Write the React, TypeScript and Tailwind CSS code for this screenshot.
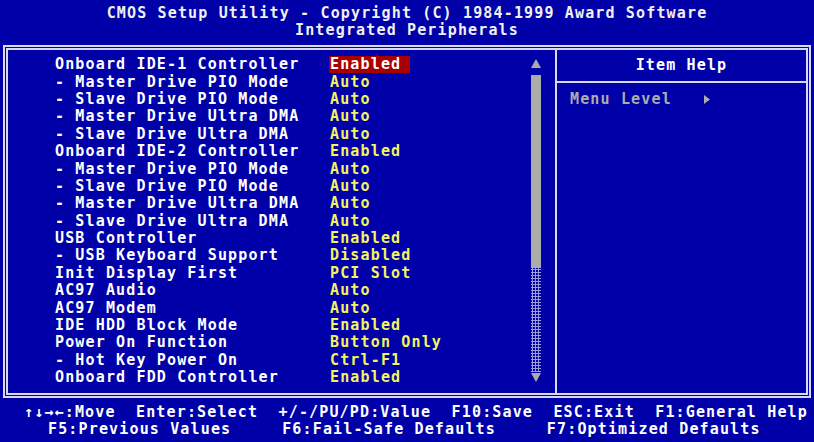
const items: [string, string][] = [
  ["Onboard IDE-1 Controller", "Enabled"],
  ["- Master Drive PIO Mode", "Auto"],
  ["- Slave Drive PIO Mode", "Auto"],
  ["- Master Drive Ultra DMA", "Auto"],
  ["- Slave Drive Ultra DMA", "Auto"],
  ["Onboard IDE-2 Controller", "Enabled"],
  ["- Master Drive PIO Mode", "Auto"],
  ["- Slave Drive PIO Mode", "Auto"],
  ["- Master Drive Ultra DMA", "Auto"],
  ["- Slave Drive Ultra DMA", "Auto"],
  ["USB Controller", "Enabled"],
  ["- USB Keyboard Support", "Disabled"],
  ["Init Display First", "PCI Slot"],
  ["AC97 Audio", "Auto"],
  ["AC97 Modem", "Auto"],
  ["IDE HDD Block Mode", "Enabled"],
  ["Power On Function", "Button Only"],
  ["- Hot Key Power On", "Ctrl-F1"],
  ["Onboard FDD Controller", "Enabled"],
];

const App = () => {
  return (
    <div className="w-[814px] h-[442px] overflow-hidden bg-[#0000a8] font-['DejaVu_Sans_Mono',monospace] text-[15px] font-bold tracking-[1.15px] leading-none">
      {/* Title */}
      <div className="pt-[5px] text-center text-[#f0f0f0]">
        <div className="h-[17px] leading-[17px]">CMOS Setup Utility - Copyright (C) 1984-1999 Award Software</div>
        <div className="h-[17px] leading-[17px]">Integrated Peripherals</div>
      </div>

      {/* Main box */}
      <div className="mx-[3px] mt-[6px] h-[353px] border-[5px] border-double border-[#d8d8f4] flex">
        <div className="w-[547px] flex">
          <div className="w-[523px] pl-[47px] pt-[6px]">
            {items.map(([label, value], i) => (
              <div key={i} className="flex h-[17.4px] items-center whitespace-pre">
                <span className="w-[274px] text-white">{label}</span>
                {i === 0 ? (
                  <span className="w-[81px] bg-[#a80000] pl-[1px] leading-[17px] text-white">{value}</span>
                ) : (
                  <span className="pl-[1px] text-[#f4f460]">{value}</span>
                )}
              </div>
            ))}
          </div>

          {/* Scroll bar */}
          <div className="w-[10px] flex flex-col items-center pt-[9px]">
            <svg width="10" height="9" viewBox="0 0 10 9">
              <polygon points="5,0 10,9 0,9" fill="#ababab" />
            </svg>
            <div className="mt-[7px] h-[193px] w-[10px] bg-[#ababab]" />
            <div className="h-[104px] w-[10px] bg-[radial-gradient(circle,#9c9cdc_1px,transparent_1.2px)] bg-[length:3px_3px]" />
            <svg width="10" height="9" viewBox="0 0 10 9" className="mt-[1px]">
              <polygon points="0,0 10,0 5,9" fill="#ababab" />
            </svg>
          </div>
        </div>

        {/* Item help */}
        <div className="flex-1 border-l-2 border-[#d8d8f4]">
          <div className="h-[33px] flex items-center justify-center border-b-2 border-[#d8d8f4] text-white">
            Item Help
          </div>
          <div className="pl-[13px] pt-[8px] h-[25px] flex items-center text-[#acacac]">
            <span>Menu Level</span>
            <svg width="6" height="9" viewBox="0 0 6 9" className="ml-[32px]">
              <polygon points="0,0 6,4.5 0,9" fill="#acacac" />
            </svg>
          </div>
        </div>
      </div>

      {/* Key help */}
      <div className="pt-[6px] text-white whitespace-pre">
        <div className="h-[17px] leading-[17px] pl-[24px]">↑↓→←:Move  Enter:Select  +/-/PU/PD:Value  F10:Save  ESC:Exit  F1:General Help</div>
        <div className="h-[17px] leading-[17px] pl-[48px]">F5:Previous Values     F6:Fail-Safe Defaults     F7:Optimized Defaults</div>
      </div>
    </div>
  );
};

export default App;
